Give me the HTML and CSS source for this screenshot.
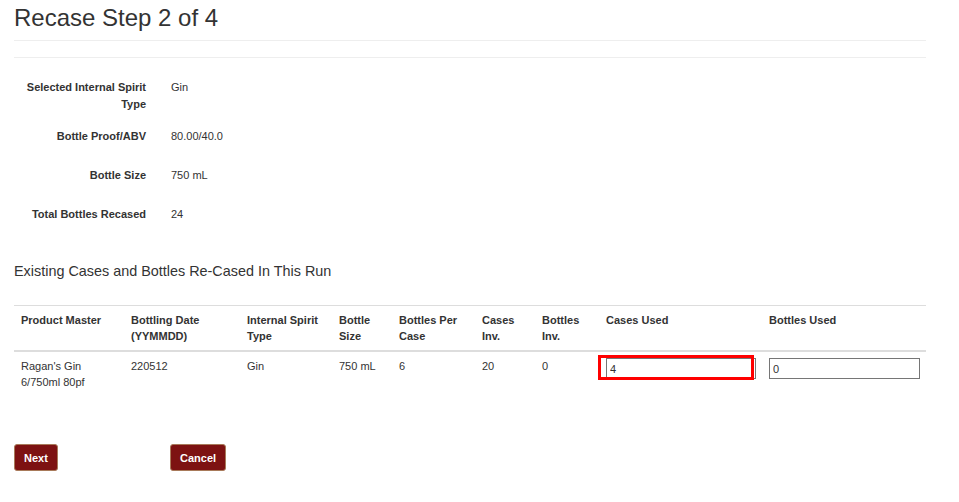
FILE: index.html
```html
<!DOCTYPE html>
<html lang="en">
<head>
    <meta charset="UTF-8">
    <title>Recase Step 2 of 4</title>
    <link rel="stylesheet" href="styles.css">
</head>
<body>
    <div class="page">
        <h1 class="page-title">Recase Step 2 of 4</h1>
        <hr class="rule">
        <hr class="rule rule-second">

        <div class="details">
            <div class="detail-row">
                <div class="detail-label">Selected Internal Spirit<br>Type</div>
                <div class="detail-value">Gin</div>
            </div>
            <div class="detail-row">
                <div class="detail-label">Bottle Proof/ABV</div>
                <div class="detail-value">80.00/40.0</div>
            </div>
            <div class="detail-row">
                <div class="detail-label">Bottle Size</div>
                <div class="detail-value">750 mL</div>
            </div>
            <div class="detail-row">
                <div class="detail-label">Total Bottles Recased</div>
                <div class="detail-value">24</div>
            </div>
        </div>

        <h4 class="section-title">Existing Cases and Bottles Re-Cased In This Run</h4>

        <table class="cases-table">
            <colgroup>
                <col style="width: 110px">
                <col style="width: 116px">
                <col style="width: 92px">
                <col style="width: 60px">
                <col style="width: 83px">
                <col style="width: 60px">
                <col style="width: 64px">
                <col style="width: 163px">
                <col style="width: 164px">
            </colgroup>
            <thead>
                <tr>
                    <th>Product Master</th>
                    <th>Bottling Date<br>(YYMMDD)</th>
                    <th>Internal Spirit<br>Type</th>
                    <th>Bottle<br>Size</th>
                    <th>Bottles Per<br>Case</th>
                    <th>Cases<br>Inv.</th>
                    <th>Bottles<br>Inv.</th>
                    <th>Cases Used</th>
                    <th>Bottles Used</th>
                </tr>
            </thead>
            <tbody>
                <tr>
                    <td>Ragan's Gin<br>6/750ml 80pf</td>
                    <td>220512</td>
                    <td>Gin</td>
                    <td>750 mL</td>
                    <td>6</td>
                    <td>20</td>
                    <td>0</td>
                    <td>
                        <div class="field-wrap">
                            <input type="text" class="qty-input" value="4">
                            <span class="field-mark"></span>
                        </div>
                    </td>
                    <td>
                        <input type="text" class="qty-input qty-wide" value="0">
                    </td>
                </tr>
            </tbody>
        </table>

        <div class="actions">
            <div class="action-slot"><button class="btn">Next</button></div>
            <div class="action-slot"><button class="btn">Cancel</button></div>
        </div>
    </div>
</body>
</html>
```

FILE: styles.css
```css
body {
    margin: 0;
    padding: 0;
    background: #fff;
    color: #333;
    font-family: "Liberation Sans", Arial, sans-serif;
    font-size: 11px;
}

.page {
    width: 912px;
    margin-left: 14px;
}

.page-title {
    margin: 5px 0 9px;
    font-size: 24px;
    font-weight: normal;
    line-height: 26px;
    color: #333;
}

.rule {
    margin: 0;
    border: 0;
    border-top: 1px solid #eee;
    height: 0;
}

.rule-second {
    margin-top: 16px;
}

.details {
    padding-top: 21px;
}

.detail-row {
    display: flex;
    min-height: 24px;
    margin-bottom: 15px;
    line-height: 17px;
}

.detail-label {
    width: 132px;
    text-align: right;
    font-weight: bold;
}

.detail-value {
    margin-left: 25px;
}

.section-title {
    margin: 33px 0 25px;
    font-size: 14.4px;
    font-weight: normal;
    line-height: 17px;
}

.cases-table {
    width: 912px;
    table-layout: fixed;
    border-collapse: separate;
    border-spacing: 0;
    line-height: 16px;
}

.cases-table th,
.cases-table td {
    padding: 6px 7px;
    text-align: left;
    vertical-align: top;
}

.cases-table th {
    border-top: 1px solid #ddd;
    border-bottom: 2px solid #ddd;
    font-weight: bold;
}

.field-wrap {
    position: relative;
    width: 150px;
}

.qty-input {
    display: block;
    box-sizing: border-box;
    width: 150px;
    height: 21px;
    margin: 0;
    padding: 0 3px;
    border: 1px solid #767676;
    font-family: "Liberation Sans", Arial, sans-serif;
    font-size: 11px;
    color: #333;
}

.qty-wide {
    width: 151px;
}

.field-mark {
    position: absolute;
    left: -8px;
    top: -3px;
    width: 156px;
    height: 25px;
    box-sizing: border-box;
    border: 3px solid #f00;
    pointer-events: none;
}

.actions {
    display: flex;
    margin-top: 48px;
}

.action-slot {
    width: 156px;
}

.btn {
    height: 27px;
    padding: 0 9px;
    background: #7d1212;
    color: #fff;
    border: 1px solid #a87a5a;
    border-radius: 3px;
    font-family: "Liberation Sans", Arial, sans-serif;
    font-size: 11px;
    font-weight: bold;
    cursor: pointer;
}
```
